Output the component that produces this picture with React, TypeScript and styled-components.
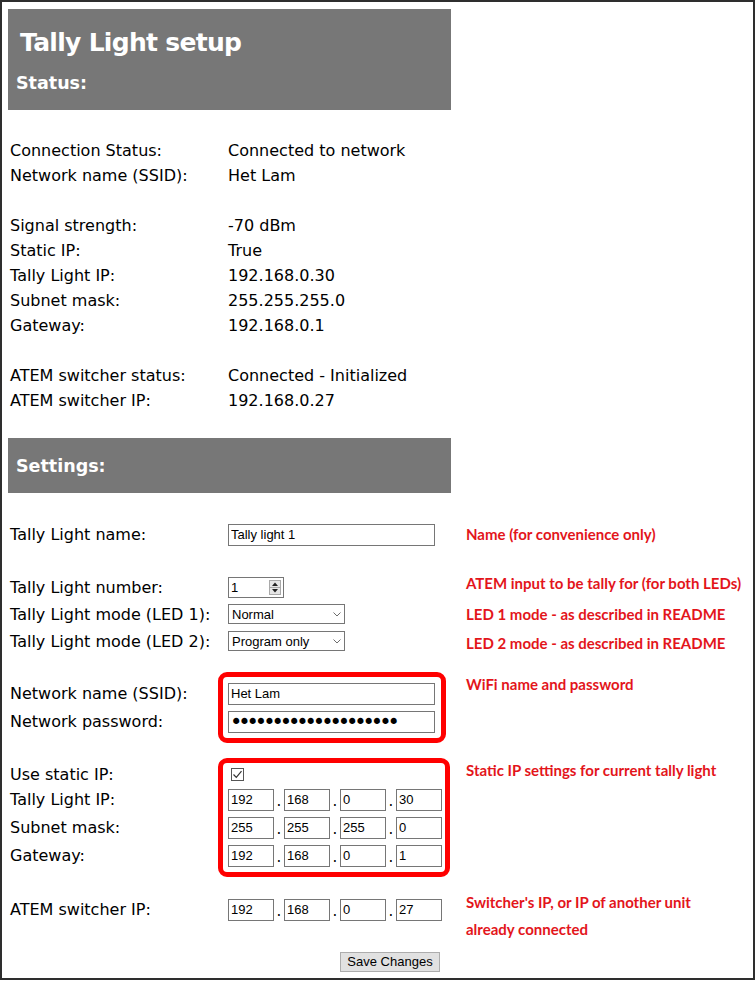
import React from "react";
import styled, { createGlobalStyle } from "styled-components";

const GlobalStyle = createGlobalStyle`
  *, *::before, *::after { box-sizing: border-box; }
  html, body { margin: 0; padding: 0; background: #ffffff; }
  body { font-family: "DejaVu Sans", Verdana, sans-serif; color: #000000; }
`;

const Frame = styled.div`
  width: 755px;
  height: 980px;
  border: 2px solid #2e2e2e;
  padding: 7px 6px 0;
  overflow: hidden;
`;

const Banner = styled.header<{ $pt: number; $pb: number }>`
  width: 443px;
  background: #777777;
  color: #ffffff;
  padding: ${(p) => p.$pt}px 8px ${(p) => p.$pb}px;
`;

const Title = styled.h1`
  margin: 0 0 13.65px 4px;
  font-size: 25px;
  line-height: 30px;
  letter-spacing: -0.7px;
  font-weight: 700;
`;

const SectionTitle = styled.h2`
  margin: 0;
  font-size: 17.5px;
  line-height: 22px;
  font-weight: 700;
`;

const StatusGrid = styled.div`
  display: grid;
  grid-template-columns: 220px 1fr;
  grid-auto-rows: 25px;
  margin: 28px 0 25px;
  font-size: 16px;
  line-height: 25px;
`;

const StatusLabel = styled.div`
  padding-left: 2px;
  white-space: nowrap;
`;

const StatusValue = styled.div`
  white-space: nowrap;
`;

const StatusGap = styled.div`
  grid-column: 1 / -1;
`;

const Group = styled.section<{ $mt: number }>`
  display: flex;
  align-items: flex-start;
  margin-top: ${(p) => p.$mt}px;
`;

const LabelCol = styled.div`
  width: 220px;
  flex: none;
  display: flex;
  flex-direction: column;
`;

const FieldLabel = styled.div<{ $h: number }>`
  height: ${(p) => p.$h}px;
  line-height: ${(p) => p.$h}px;
  padding-left: 2px;
  font-size: 16px;
  white-space: nowrap;
`;

const ControlCol = styled.div`
  width: 238px;
  flex: none;
  display: flex;
  flex-direction: column;
  align-items: flex-start;
`;

type Pad = { t: number; r: number; b: number; l: number };

const Highlight = styled.div<{ $pad: Pad }>`
  display: flex;
  flex-direction: column;
  border: 5px solid #ff0000;
  border-radius: 9px;
  padding: ${(p) => `${p.$pad.t}px ${p.$pad.r}px ${p.$pad.b}px ${p.$pad.l}px`};
  margin: ${(p) =>
    `${-(p.$pad.t + 5)}px 0 ${-(p.$pad.b + 5)}px ${-(p.$pad.l + 5)}px`};
`;

const ControlRow = styled.div<{ $h: number }>`
  height: ${(p) => p.$h}px;
  display: flex;
  align-items: center;
`;

const NoteCol = styled.div`
  flex: 1;
  display: flex;
  flex-direction: column;
`;

const NoteSlot = styled.div<{ $h: number }>`
  height: ${(p) => p.$h}px;
  overflow: visible;
`;

const Note = styled.div<{ $shift: number }>`
  font-family: Lato, "Open Sans", sans-serif;
  font-weight: 700;
  font-size: 15px;
  line-height: 27px;
  color: #e3151b;
  white-space: nowrap;
  transform: translateY(${(p) => p.$shift}px);
`;

const TextInput = styled.input<{ $w?: number }>`
  width: ${(p) => p.$w ?? 207}px;
  height: 22px;
  margin: 0;
  border: 1px solid #767676;
  border-radius: 0;
  padding: 0 2px;
  background: #ffffff;
  color: #000000;
  font-family: "Liberation Sans", Arial, sans-serif;
  font-size: 13px;
  outline: none;
`;

const PasswordInput = styled(TextInput)`
  font-family: "DejaVu Sans", sans-serif;
  font-size: 21px;
  letter-spacing: -4.1px;
  padding: 0 1px;
`;

const NumberBox = styled.div`
  display: flex;
  align-items: center;
  width: 56px;
  height: 21px;
  border: 1px solid #767676;
  background: #ffffff;
  padding: 0 2px 0 2px;
`;

const NumberField = styled.input`
  flex: 1;
  min-width: 0;
  border: 0;
  outline: none;
  padding: 0;
  margin: 0;
  background: transparent;
  font-family: "Liberation Sans", Arial, sans-serif;
  font-size: 13px;
  color: #000000;
`;

const Spinner = styled.div`
  display: flex;
  flex-direction: column;
  width: 12px;
  height: 15px;
  border: 1px solid #a9a9a9;
  background: #e6e6e6;
`;

const SpinHalf = styled.span<{ $top?: boolean }>`
  flex: 1;
  display: flex;
  align-items: center;
  justify-content: center;
  border-bottom: ${(p) => (p.$top ? "1px solid #a9a9a9" : "0")};
`;

const SelectBox = styled.div`
  display: flex;
  align-items: center;
  width: 117px;
  height: 20px;
  border: 1px solid #767676;
  background: #ffffff;
  padding-right: 3px;
`;

const SelectField = styled.select`
  appearance: none;
  -webkit-appearance: none;
  flex: 1;
  min-width: 0;
  height: 100%;
  border: 0;
  outline: none;
  background: transparent;
  padding: 0 0 0 3px;
  margin: 0;
  font-family: "Liberation Sans", Arial, sans-serif;
  font-size: 13px;
  color: #000000;
`;

const CheckBox = styled.span`
  display: inline-flex;
  align-items: center;
  justify-content: center;
  width: 13px;
  height: 13px;
  margin-left: 3px;
  border: 1px solid #555555;
  background: #ffffff;
`;

const IpRow = styled.div`
  display: flex;
  align-items: flex-end;
`;

const IpDot = styled.span`
  width: 10px;
  text-align: center;
  font-size: 15px;
  line-height: 15px;
  padding-bottom: 2px;
`;

const SaveButton = styled.button`
  display: block;
  margin: 28px 0 0 332px;
  width: 100px;
  height: 20px;
  padding: 0;
  border: 1px solid #adadad;
  border-radius: 0;
  background: #e1e1e1;
  color: #000000;
  font-family: "Liberation Sans", Arial, sans-serif;
  font-size: 13px;
`;

const Chevron = () => (
  <svg width="8" height="5" viewBox="0 0 8 5" aria-hidden="true">
    <polyline points="0.5,0.5 4,4 7.5,0.5" fill="none" stroke="#6d6d6d" strokeWidth="1" />
  </svg>
);

const Tri = ({ up }: { up?: boolean }) => (
  <svg width="6" height="4" viewBox="0 0 6 4" aria-hidden="true">
    <polygon points={up ? "0,4 3,0.5 6,4" : "0,0 3,3.5 6,0"} fill="#222222" />
  </svg>
);

const Check = () => (
  <svg width="11" height="11" viewBox="0 0 11 11" aria-hidden="true">
    <polyline points="1.5,5.5 4.3,8.3 9.5,2.2" fill="none" stroke="#333333" strokeWidth="1.2" />
  </svg>
);

const NumberInput = ({ value }: { value: string }) => (
  <NumberBox>
    <NumberField type="text" defaultValue={value} />
    <Spinner>
      <SpinHalf $top>
        <Tri up />
      </SpinHalf>
      <SpinHalf>
        <Tri />
      </SpinHalf>
    </Spinner>
  </NumberBox>
);

const Select = ({ value, options }: { value: string; options: string[] }) => (
  <SelectBox>
    <SelectField defaultValue={value}>
      {options.map((o) => (
        <option key={o}>{o}</option>
      ))}
    </SelectField>
    <Chevron />
  </SelectBox>
);

const IpFields = ({ parts }: { parts: string[] }) => (
  <IpRow>
    {parts.map((p, i) => (
      <React.Fragment key={i}>
        {i > 0 && <IpDot>.</IpDot>}
        <TextInput $w={46} type="text" defaultValue={p} />
      </React.Fragment>
    ))}
  </IpRow>
);

type FieldRowDef = {
  label: string;
  h: number;
  control: React.ReactNode;
  note?: string[];
  shift?: number;
};

const FieldGroup = ({
  mt,
  rows,
  highlight,
}: {
  mt: number;
  rows: FieldRowDef[];
  highlight?: Pad;
}) => {
  const controls = rows.map((r, i) => (
    <ControlRow key={i} $h={r.h}>
      {r.control}
    </ControlRow>
  ));
  return (
    <Group $mt={mt}>
      <LabelCol>
        {rows.map((r, i) => (
          <FieldLabel key={i} $h={r.h}>
            {r.label}
          </FieldLabel>
        ))}
      </LabelCol>
      <ControlCol>{highlight ? <Highlight $pad={highlight}>{controls}</Highlight> : controls}</ControlCol>
      <NoteCol>
        {rows.map((r, i) => (
          <NoteSlot key={i} $h={r.h}>
            {r.note && (
              <Note $shift={r.shift ?? 0}>
                {r.note.map((line) => (
                  <div key={line}>{line}</div>
                ))}
              </Note>
            )}
          </NoteSlot>
        ))}
      </NoteCol>
    </Group>
  );
};

const status: ([string, string] | null)[] = [
  ["Connection Status:", "Connected to network"],
  ["Network name (SSID):", "Het Lam"],
  null,
  ["Signal strength:", "-70 dBm"],
  ["Static IP:", "True"],
  ["Tally Light IP:", "192.168.0.30"],
  ["Subnet mask:", "255.255.255.0"],
  ["Gateway:", "192.168.0.1"],
  null,
  ["ATEM switcher status:", "Connected - Initialized"],
  ["ATEM switcher IP:", "192.168.0.27"],
];

const modes = ["Normal", "Preview stay on", "Program only", "On"];

export default function App() {
  return (
    <>
      <GlobalStyle />
      <Frame>
        <Banner $pt={19.35} $pb={16}>
          <Title>Tally Light setup</Title>
          <SectionTitle>Status:</SectionTitle>
        </Banner>

        <StatusGrid>
          {status.map((row, i) =>
            row ? (
              <React.Fragment key={i}>
                <StatusLabel>{row[0]}</StatusLabel>
                <StatusValue>{row[1]}</StatusValue>
              </React.Fragment>
            ) : (
              <StatusGap key={i} />
            )
          )}
        </StatusGrid>

        <Banner $pt={17} $pb={16}>
          <SectionTitle>Settings:</SectionTitle>
        </Banner>

        <form onSubmit={(e) => e.preventDefault()}>
          <FieldGroup
            mt={27.75}
            rows={[
              {
                label: "Tally Light name:",
                h: 28,
                control: <TextInput type="text" defaultValue="Tally light 1" />,
                note: ["Name (for convenience only)"],
                shift: 0,
              },
            ]}
          />
          <FieldGroup
            mt={25}
            rows={[
              {
                label: "Tally Light number:",
                h: 27,
                control: <NumberInput value="1" />,
                note: ["ATEM input to be tally for (for both LEDs)"],
                shift: -4.5,
              },
              {
                label: "Tally Light mode (LED 1):",
                h: 27,
                control: <Select value="Normal" options={modes} />,
                note: ["LED 1 mode - as described in README"],
                shift: 0,
              },
              {
                label: "Tally Light mode (LED 2):",
                h: 27,
                control: <Select value="Program only" options={modes} />,
                note: ["LED 2 mode - as described in README"],
                shift: 1.5,
              },
            ]}
          />
          <FieldGroup
            mt={25}
            highlight={{ t: 3, r: 6, b: 2, l: 5 }}
            rows={[
              {
                label: "Network name (SSID):",
                h: 28,
                control: <TextInput type="text" defaultValue="Het Lam" />,
                note: ["WiFi name and password"],
                shift: -9.5,
              },
              {
                label: "Network password:",
                h: 28,
                control: <PasswordInput type="password" defaultValue="tallylightpassword12" />,
              },
            ]}
          />
          <FieldGroup
            mt={27}
            highlight={{ t: 0, r: 3, b: 2, l: 5 }}
            rows={[
              {
                label: "Use static IP:",
                h: 23,
                control: (
                  <CheckBox role="checkbox" aria-checked="true">
                    <Check />
                  </CheckBox>
                ),
                note: ["Static IP settings for current tally light"],
                shift: -6.5,
              },
              {
                label: "Tally Light IP:",
                h: 28,
                control: <IpFields parts={["192", "168", "0", "30"]} />,
              },
              {
                label: "Subnet mask:",
                h: 28,
                control: <IpFields parts={["255", "255", "255", "0"]} />,
              },
              {
                label: "Gateway:",
                h: 28,
                control: <IpFields parts={["192", "168", "0", "1"]} />,
              },
            ]}
          />
          <FieldGroup
            mt={26}
            rows={[
              {
                label: "ATEM switcher IP:",
                h: 28,
                control: <IpFields parts={["192", "168", "0", "27"]} />,
                note: ["Switcher's IP, or IP of another unit", "already connected"],
                shift: -7.5,
              },
            ]}
          />
          <SaveButton type="submit">Save Changes</SaveButton>
        </form>
      </Frame>
    </>
  );
}
